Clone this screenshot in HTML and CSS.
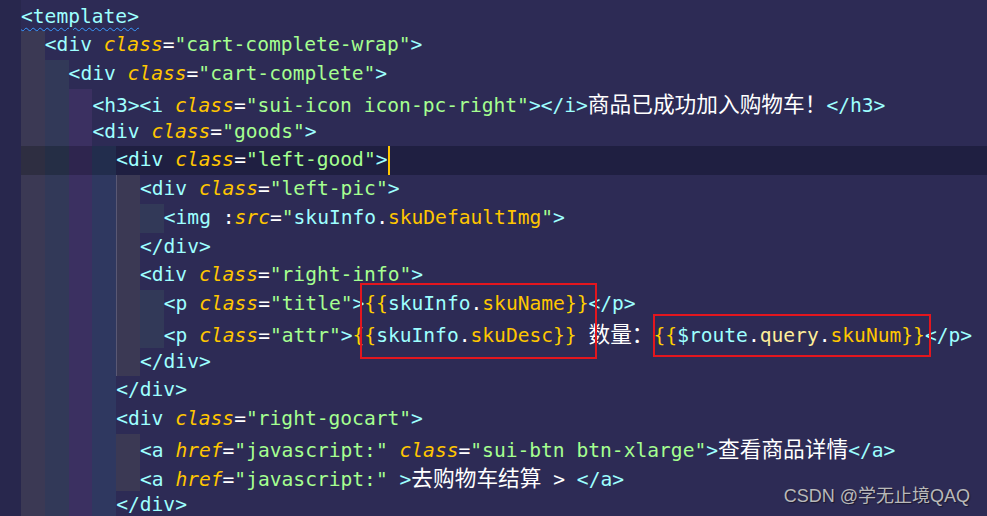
FILE: index.html
```html
<!DOCTYPE html>
<html lang="zh">
<head>
<meta charset="utf-8">
<title>template</title>
<link rel="stylesheet" href="styles.css">
</head>
<body>
<div class="editor">
  <div class="gutter"></div>
  <div class="code">
    <div class="line"><span class="txt"><span class="squiggle"><span class="t">&lt;template&gt;</span></span></span></div>
    <div class="line"><span class="ind c1"></span><span class="txt"><span class="t">&lt;div</span> <span class="a">class</span><span class="e">=</span><span class="s">"cart-complete-wrap"</span><span class="t">&gt;</span></span></div>
    <div class="line"><span class="ind c1"></span><span class="ind c2"></span><span class="txt"><span class="t">&lt;div</span> <span class="a">class</span><span class="e">=</span><span class="s">"cart-complete"</span><span class="t">&gt;</span></span></div>
    <div class="line"><span class="ind c1"></span><span class="ind c2"></span><span class="ind c3"></span><span class="txt"><span class="t">&lt;h3&gt;&lt;i</span> <span class="a">class</span><span class="e">=</span><span class="s">"sui-icon icon-pc-right"</span><span class="t">&gt;&lt;/i&gt;</span><span class="cjk">商品已成功加入购物车！</span><span class="t">&lt;/h3&gt;</span></span></div>
    <div class="line"><span class="ind c1"></span><span class="ind c2"></span><span class="ind c3"></span><span class="txt"><span class="t">&lt;div</span> <span class="a">class</span><span class="e">=</span><span class="s">"goods"</span><span class="t">&gt;</span></span></div>
    <div class="line current"><span class="ind c1"></span><span class="ind c2"></span><span class="ind c3"></span><span class="ind c4"></span><span class="txt"><span class="t">&lt;div</span> <span class="a">class</span><span class="e">=</span><span class="s">"left-good"</span><span class="t">&gt;</span><span class="caret"></span></span></div>
    <div class="line"><span class="ind c1"></span><span class="ind c2"></span><span class="ind c3"></span><span class="ind c4"></span><span class="ind c1 active"></span><span class="txt"><span class="t">&lt;div</span> <span class="a">class</span><span class="e">=</span><span class="s">"left-pic"</span><span class="t">&gt;</span></span></div>
    <div class="line"><span class="ind c1"></span><span class="ind c2"></span><span class="ind c3"></span><span class="ind c4"></span><span class="ind c1 active"></span><span class="ind c2"></span><span class="txt"><span class="t">&lt;img</span> <span class="e">:</span><span class="a">src</span><span class="e">=</span><span class="s">"</span><span class="v">skuInfo</span><span class="e">.</span><span class="p">skuDefaultImg</span><span class="s">"</span><span class="t">&gt;</span></span></div>
    <div class="line"><span class="ind c1"></span><span class="ind c2"></span><span class="ind c3"></span><span class="ind c4"></span><span class="ind c1 active"></span><span class="txt"><span class="t">&lt;/div&gt;</span></span></div>
    <div class="line"><span class="ind c1"></span><span class="ind c2"></span><span class="ind c3"></span><span class="ind c4"></span><span class="ind c1 active"></span><span class="txt"><span class="t">&lt;div</span> <span class="a">class</span><span class="e">=</span><span class="s">"right-info"</span><span class="t">&gt;</span></span></div>
    <div class="line"><span class="ind c1"></span><span class="ind c2"></span><span class="ind c3"></span><span class="ind c4"></span><span class="ind c1 active"></span><span class="ind c2"></span><span class="txt"><span class="t">&lt;p</span> <span class="a">class</span><span class="e">=</span><span class="s">"title"</span><span class="t">&gt;</span><span class="b">{{</span><span class="v">skuInfo</span><span class="e">.</span><span class="p">skuName</span><span class="b">}}</span><span class="t">&lt;/p&gt;</span></span></div>
    <div class="line"><span class="ind c1"></span><span class="ind c2"></span><span class="ind c3"></span><span class="ind c4"></span><span class="ind c1 active"></span><span class="ind c2"></span><span class="txt"><span class="t">&lt;p</span> <span class="a">class</span><span class="e">=</span><span class="s">"attr"</span><span class="t">&gt;</span><span class="b">{{</span><span class="v">skuInfo</span><span class="e">.</span><span class="p">skuDesc</span><span class="b">}}</span><span class="e"> </span><span class="cjk">数量：</span><span class="b">{{</span><span class="v">$route</span><span class="e">.</span><span class="q">query</span><span class="e">.</span><span class="p">skuNum</span><span class="b">}}</span><span class="t">&lt;/p&gt;</span></span></div>
    <div class="line"><span class="ind c1"></span><span class="ind c2"></span><span class="ind c3"></span><span class="ind c4"></span><span class="ind c1 active"></span><span class="txt"><span class="t">&lt;/div&gt;</span></span></div>
    <div class="line"><span class="ind c1"></span><span class="ind c2"></span><span class="ind c3"></span><span class="ind c4"></span><span class="txt"><span class="t">&lt;/div&gt;</span></span></div>
    <div class="line"><span class="ind c1"></span><span class="ind c2"></span><span class="ind c3"></span><span class="ind c4"></span><span class="txt"><span class="t">&lt;div</span> <span class="a">class</span><span class="e">=</span><span class="s">"right-gocart"</span><span class="t">&gt;</span></span></div>
    <div class="line"><span class="ind c1"></span><span class="ind c2"></span><span class="ind c3"></span><span class="ind c4"></span><span class="ind c1"></span><span class="txt"><span class="t">&lt;a</span> <span class="a">href</span><span class="e">=</span><span class="s">"javascript:"</span> <span class="a">class</span><span class="e">=</span><span class="s">"sui-btn btn-xlarge"</span><span class="t">&gt;</span><span class="cjk">查看商品详情</span><span class="t">&lt;/a&gt;</span></span></div>
    <div class="line"><span class="ind c1"></span><span class="ind c2"></span><span class="ind c3"></span><span class="ind c4"></span><span class="ind c1"></span><span class="txt"><span class="t">&lt;a</span> <span class="a">href</span><span class="e">=</span><span class="s">"javascript:"</span> <span class="t">&gt;</span><span class="cjk">去购物车结算</span><span class="e"> &gt; </span><span class="t">&lt;/a&gt;</span></span></div>
    <div class="line"><span class="ind c1"></span><span class="ind c2"></span><span class="ind c3"></span><span class="ind c4"></span><span class="txt"><span class="t">&lt;/div&gt;</span></span></div>
  </div>
  <div class="mark mark-name"></div>
  <div class="mark mark-num"></div>
  <div class="watermark">CSDN @学无止境QAQ</div>
</div>
</body>
</html>
```

FILE: styles.css
```css
html, body {
  margin: 0;
  padding: 0;
  height: 100%;
  background: #2d2b55;
  overflow: hidden;
}

.editor {
  position: relative;
  display: flex;
  height: 516px;
  background: #2d2b55;
}

.gutter {
  width: 21px;
  flex: none;
  background: #28274d;
}

.code {
  flex: 1;
  padding-top: 2.5px;
  font-family: "DejaVu Sans Mono", monospace;
  font-size: 19.6px;
  color: #ffffff;
}

.line {
  display: flex;
  height: 28.75px;
  line-height: 28.75px;
}

.line.current {
  background: #1f1f41;
}

.ind {
  flex: none;
  width: 23.8px;
  height: 100%;
  box-sizing: border-box;
}

.c1 { background: rgba(255, 255, 64, 0.07); }
.c2 { background: rgba(127, 255, 127, 0.07); }
.c3 { background: rgba(255, 127, 255, 0.07); }
.c4 { background: rgba(79, 236, 236, 0.07); }

.ind.active {
  border-left: 1px solid rgba(200, 200, 230, 0.22);
}

.txt {
  white-space: pre;
}

.squiggle {
  text-decoration: underline wavy #3a9bff;
  text-decoration-thickness: 1px;
  text-underline-offset: 4px;
}

.t { color: #9effff; }
.a { color: #ffc600; font-style: italic; }
.s { color: #a5ff90; }
.e { color: #ffffff; }
.b { color: #ffd000; }
.v { color: #9effff; }
.p { color: #ffc600; }
.q { color: #ffee9a; }

.cjk {
  font-family: "Noto Sans CJK SC", sans-serif;
  font-size: 21.7px;
  color: #ffffff;
}

.caret {
  display: inline-block;
  width: 2px;
  height: 28.75px;
  margin-right: -2px;
  vertical-align: top;
  background: #ffc600;
}

.mark {
  position: absolute;
  box-sizing: border-box;
  border: 2px solid #e3161e;
}

.mark-name {
  left: 360px;
  top: 283px;
  width: 237px;
  height: 76px;
}

.mark-num {
  left: 653px;
  top: 314px;
  width: 278px;
  height: 43px;
}

.watermark {
  position: absolute;
  right: 17px;
  top: 487px;
  font-family: "Liberation Sans", "Noto Sans CJK SC", sans-serif;
  font-size: 18px;
  line-height: 18px;
  color: #b9b9b9;
  text-shadow: 1px 1px 1px rgba(0, 0, 0, 0.45);
}
```
